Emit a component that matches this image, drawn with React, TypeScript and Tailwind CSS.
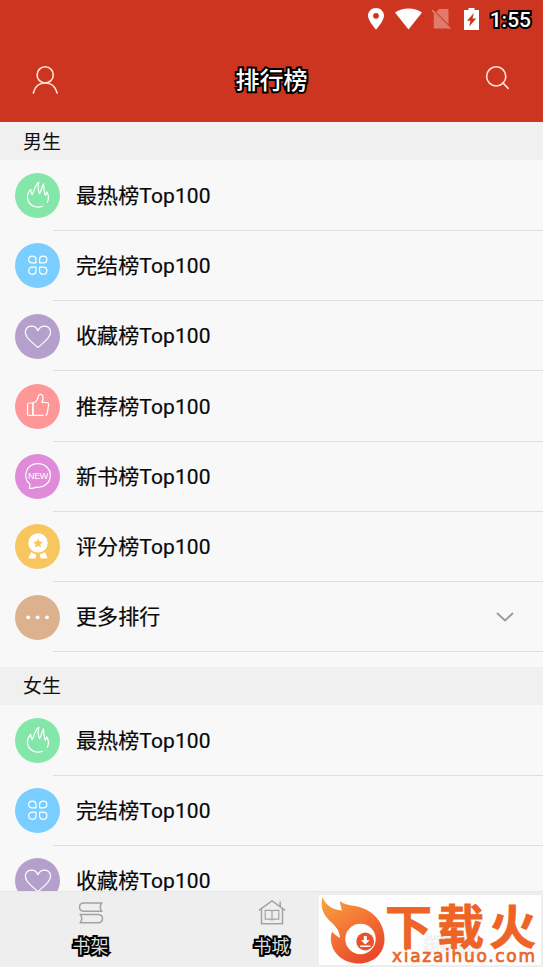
import type { ReactNode } from "react";

type RankItem = {
  id: string;
  label: string;
  color: string;
  icon: ReactNode;
  expandable?: boolean;
};

const iconProps = {
  viewBox: "0 0 45 45",
  className: "h-[45px] w-[45px]",
  fill: "none",
  stroke: "white",
  strokeWidth: 1.2,
  strokeLinecap: "round" as const,
  strokeLinejoin: "round" as const,
};

const hot = (
  <svg {...iconProps}>
    <path d="M27.5 33.2C22 35.2 15.8 33.6 13.4 28.2C11.4 23.3 13.3 18.8 15.7 16.3C15.6 18.3 16.1 20.2 17.2 21.5C19.5 18.2 19.2 12.8 23.8 9.3C22.8 13.2 22.8 16.9 24.5 20.6C26.4 17.6 26.9 13.9 28.5 10.8C28.9 14.8 28.6 18.8 30.2 22.3C31.4 21.1 31.3 19.8 31.8 18.8C33.6 22.4 33.9 26.5 32.3 29.3" />
  </svg>
);

const finished = (
  <svg {...iconProps}>
    <path d="M17.3 13.2C19.8 13.2 21 14.5 21 16.8V19.8H17.3C15 19.8 13.7 18.6 13.7 16.5S15 13.2 17.3 13.2Z" />
    <path d="M28.3 13.2C25.8 13.2 24.6 14.5 24.6 16.8V19.8H28.3C30.6 19.8 31.9 18.6 31.9 16.5S30.6 13.2 28.3 13.2Z" />
    <path d="M17.3 31.3C19.8 31.3 21 30 21 27.7V24.2H17.3C15 24.2 13.7 25.6 13.7 27.8S15 31.3 17.3 31.3Z" />
    <path d="M28.3 31.3C25.8 31.3 24.6 30 24.6 27.7V24.2H28.3C30.6 24.2 31.9 25.6 31.9 27.8S30.6 31.3 28.3 31.3Z" />
  </svg>
);

const favorite = (
  <svg {...iconProps}>
    <path d="M23 33.5C18.5 29.7 14 26 11.9 22.7C8.4 17.2 11.6 12.1 16.4 12.1C19.6 12.1 21.8 13.8 23 16.7C24.2 13.8 26.5 12.1 29.6 12.1C34.4 12.1 37.5 17.2 34 22.7C31.9 26 27.5 29.7 23 33.5Z" />
  </svg>
);

const recommend = (
  <svg {...iconProps}>
    <path d="M28 31.3H18V19.1C20.4 18.2 22.7 16 23.2 12.5C23.5 9.7 27.4 9.5 27.9 12.5C28.2 14.8 27.7 16.7 27 18.5H31.5C33 18.5 33.8 19.4 33.6 20.8L32.3 29.2C32.1 30.5 31.8 31 30.8 31.3" />
    <path d="M17.8 19H14C13 19 12.5 19.5 12.5 20.4V29.9C12.5 30.9 13 31.4 14 31.4H16.2C17.3 31.4 17.8 30.9 17.8 29.9Z" />
  </svg>
);

const newest = (
  <svg {...iconProps}>
    <path d="M14.3 34.2C14.9 32.8 15 31.7 14.8 30.1C7.3 24.8 10.2 9.6 23 9.6C30 9.6 35.3 14.8 35.3 21.5C35.3 29 28.8 34.3 21 33.1C18.7 34.3 16.7 34.6 14.3 34.2Z" />
    <text
      x="23"
      y="24.6"
      textAnchor="middle"
      fontSize="9"
      letterSpacing="-0.3"
      fontFamily="Liberation Sans, sans-serif"
      fill="white"
      stroke="none"
    >
      NEW
    </text>
  </svg>
);

const score = (
  <svg {...iconProps} fill="white" stroke="none">
    <path
      fillRule="evenodd"
      d="M23 9.2a9.7 9.7 0 1 1 0 19.4a9.7 9.7 0 0 1 0-19.4ZM23 14.6l-1.4 3-3.4.4 2.5 2.3-.7 3.3 3-1.7 3 1.7-.7-3.3 2.5-2.3-3.4-.4Z"
    />
    <path d="M16 28.2 21.2 30.4 20.3 34.4H17.7L13.2 34.2ZM30 28.2 24.8 30.4 25.7 34.4H28.3L32.8 34.2Z" />
  </svg>
);

const more = (
  <svg {...iconProps} fill="white" stroke="none">
    <circle cx="13.2" cy="22.3" r="1.9" />
    <circle cx="22.6" cy="22.3" r="1.9" />
    <circle cx="32" cy="22.3" r="1.9" />
  </svg>
);

const items: RankItem[] = [
  { id: "hot", label: "最热榜Top100", color: "bg-[#84e6a9]", icon: hot },
  { id: "finished", label: "完结榜Top100", color: "bg-[#7acdff]", icon: finished },
  { id: "favorite", label: "收藏榜Top100", color: "bg-[#b5a0cb]", icon: favorite },
  { id: "recommend", label: "推荐榜Top100", color: "bg-[#ff9697]", icon: recommend },
  { id: "newest", label: "新书榜Top100", color: "bg-[#df8bd9]", icon: newest },
  { id: "score", label: "评分榜Top100", color: "bg-[#f8c65f]", icon: score },
  { id: "more", label: "更多排行", color: "bg-[#dcb18e]", icon: more, expandable: true },
];

function StatusBar() {
  return (
    <div className="flex h-[38px] items-center justify-end pr-3">
      <svg viewBox="0 0 16 22" className="mr-[11px] h-[22px] w-4" fill="white">
        <path
          fillRule="evenodd"
          d="M8 0C3.5 0 0 3.4 0 7.8C0 13 8 21.6 8 21.6S16 13 16 7.8C16 3.4 12.5 0 8 0ZM8 4.9a2.9 2.9 0 1 1 0 5.8a2.9 2.9 0 0 1 0-5.8Z"
        />
      </svg>
      <svg viewBox="0 0 27 22" className="mr-[9px] h-[22px] w-[27px]" fill="white">
        <path d="M0 4.5C8 -1 19 -1 27 4.5L13.5 21.5Z" />
      </svg>
      <svg viewBox="0 0 21 22" className="mr-[12px] h-[22px] w-[21px]">
        <path d="M8 1H17.5V20.5H2.8V6.5Z" fill="#df7a6c" />
        <path d="M0 .2 19.5 19.7" stroke="#cd3521" strokeWidth="1.8" />
        <path d="M1 2.2 19 20.6" stroke="#df7a6c" strokeWidth="1.8" />
      </svg>
      <svg viewBox="0 0 15 22" className="mr-[11px] h-[22px] w-[15px]">
        <path d="M4.5 0H10.5V2H15V22H0V2H4.5Z" fill="white" />
        <path d="M9.8 5 3 12.8H6.4L5.2 18.6 12.3 10.4H8.6Z" fill="#cd3521" />
      </svg>
      <span className="pt-0.5 text-[21px] leading-none font-medium text-white [-webkit-text-stroke:4px_black] [paint-order:stroke_fill]">
        1:55
      </span>
    </div>
  );
}

function Header() {
  return (
    <header className="h-[122px] shrink-0 bg-[#cd3521]">
      <StatusBar />
      <div className="flex h-[84px] items-center justify-between pr-8 pl-8">
        <svg
          viewBox="0 0 26 30"
          className="h-[30px] w-[26px]"
          fill="none"
          stroke="#ffe5d5"
          strokeWidth="1.6"
          strokeLinecap="round"
        >
          <circle cx="13.2" cy="9.9" r="8.1" />
          <path d="M1.3 28C2.8 21.8 7 18 13.2 18S23.6 21.8 25.1 28" />
        </svg>
        <h1 className="pt-0.5 text-2xl leading-none font-medium text-white [-webkit-text-stroke:4px_black] [paint-order:stroke_fill]">
          排行榜
        </h1>
        <svg
          viewBox="0 0 26 30"
          className="h-[30px] w-[26px]"
          fill="none"
          stroke="#ffe5d5"
          strokeWidth="1.6"
          strokeLinecap="round"
        >
          <circle cx="11.2" cy="11.4" r="9.6" />
          <path d="M17.8 17.8 23.2 23.4" />
        </svg>
      </div>
    </header>
  );
}

function RankSection({ title, rows }: { title: string; rows: RankItem[] }) {
  return (
    <section className="mb-[14.5px] shrink-0">
      <h2 className="flex h-[38px] items-center bg-[#f0f0f0] pt-0.5 pl-[23px] text-[19px] leading-none text-[#111]">
        {title}
      </h2>
      <ul className="pt-[0.5px]">
        {rows.map((item) => (
          <li key={item.id} className="flex h-[70.25px] items-center pl-[15px]">
            <div className={`h-[45px] w-[45px] shrink-0 rounded-full ${item.color}`}>{item.icon}</div>
            <div className="-ml-[7px] flex h-full grow items-center justify-between border-b border-[#dedede] pt-[2.6px] pr-[29.5px] pl-[23px]">
              <span className="text-[21px] leading-none tracking-[0.1px] text-[#080808] [-webkit-text-stroke:0.2px_#080808]">
                {item.label}
              </span>
              {item.expandable && (
                <svg viewBox="0 0 18 10" className="mb-0.5 h-2.5 w-[18px]" fill="none" stroke="#999" strokeWidth="1.8">
                  <path d="M1 1 9 8.5 17 1" />
                </svg>
              )}
            </div>
          </li>
        ))}
      </ul>
    </section>
  );
}

function Tab({ label, children }: { label: string; children: ReactNode }) {
  return (
    <div className="flex flex-1 flex-col items-center pt-[7px]">
      {children}
      <span className="mt-[11px] text-lg leading-none text-[#ddd] [-webkit-text-stroke:4px_black] [paint-order:stroke_fill]">
        {label}
      </span>
    </div>
  );
}

function TabBar() {
  return (
    <nav className="flex h-[76px] shrink-0 border-t border-[#e6e6e6] bg-[#eeeeee]">
      <Tab label="书架">
        <svg viewBox="0 0 28 28" className="h-7 w-7" fill="none" stroke="#a3a3a3" strokeWidth="1.5">
          <path d="M25.5 4H7.2C4.3 4 2.5 5.6 2.5 8S4.3 12.3 7.2 12.3H25.5M24.7 4C22.8 6.7 22.8 9.6 24.7 12.3" />
          <path d="M2.5 15.4H20.8C23.7 15.4 25.5 17.1 25.5 19.5S23.7 23.8 20.8 23.8H2.5M3.3 15.4C5.2 18.1 5.2 21.1 3.3 23.8" />
        </svg>
      </Tab>
      <Tab label="书城">
        <svg viewBox="0 0 28 28" className="h-7 w-7" fill="none" stroke="#a3a3a3" strokeWidth="1.5">
          <path d="M.8 11.3 14 1.8 27.2 11.3M3.5 10V24.8H24.5V10M22.2 7.3V2.5" />
          <path d="M7.2 11.4H12.7L14 12.3 15.3 11.4H20.8V20.2H15.3L14 21 12.7 20.2H7.2ZM14 12.3V21" strokeWidth="1.2" />
        </svg>
      </Tab>
      <Tab label="排行榜">
        <svg viewBox="0 0 28 28" className="h-7 w-7" fill="none" stroke="#dc4a37" strokeWidth="1.5">
          <path d="M3 24V14H10V24M10 24V5H18V24M18 24V10H25V24Z" />
        </svg>
      </Tab>
    </nav>
  );
}

function SiteBadge() {
  return (
    <div className="absolute right-0.5 bottom-0.5 flex h-[70px] w-[222px] bg-white/94">
      <svg viewBox="0 0 66 70" className="h-[70px] w-[66px] shrink-0">
        <defs>
          <linearGradient id="flame" x1="0" y1="0" x2="0.6" y2="1">
            <stop offset="0" stopColor="#f7a63b" />
            <stop offset="0.5" stopColor="#f47736" />
            <stop offset="1" stopColor="#e94b2b" />
          </linearGradient>
        </defs>
        <path
          d="M3.5 2C6 9 12 14.5 23 15.5C22 12 21 9 21 6C27 11.5 37 9.5 47 14.5C59 20.5 65.5 32 65.5 44C65.5 59 54 68.5 40 68.5C25 68.5 13.5 59 12 46C11.6 42 12 39 13.2 36.8C15.5 39.5 18 41.5 21 43C20.5 36 17.5 32 12 27C4 20 1 12 3.5 2Z"
          fill="url(#flame)"
        />
        <circle cx="41.5" cy="44" r="15.2" fill="white" />
        <circle cx="46.2" cy="46.5" r="8.9" fill="#ea5129" />
        <path d="M44.8 41H47.8V45.3H50.7L46.3 49.6 41.9 45.3H44.8ZM41.2 50.5H51.4V52H41.2Z" fill="white" />
      </svg>
      <div className="flex flex-col pt-[11px] text-[#ed6426]">
        <span className="text-[47px] leading-[44px] font-bold tracking-[5px] whitespace-nowrap [-webkit-text-stroke:0.8px_#ed6426]">
          下载火
        </span>
        <span className="-mt-[3px] ml-[7px] font-['DejaVu_Sans'] text-[17px] leading-[18px] tracking-[1.7px] whitespace-nowrap [-webkit-text-stroke:0.7px_#ed6426]">
          xiazaihuo.com
        </span>
      </div>
    </div>
  );
}

export default function App() {
  return (
    <div className="relative flex h-[967px] w-[543px] flex-col overflow-hidden bg-[#f8f8f8] font-[Roboto,'Noto_Sans_CJK_SC',sans-serif]">
      <Header />
      <main className="flex min-h-0 flex-1 flex-col overflow-hidden">
        <RankSection title="男生" rows={items} />
        <RankSection title="女生" rows={items.slice(0, 3)} />
      </main>
      <TabBar />
      <SiteBadge />
    </div>
  );
}
